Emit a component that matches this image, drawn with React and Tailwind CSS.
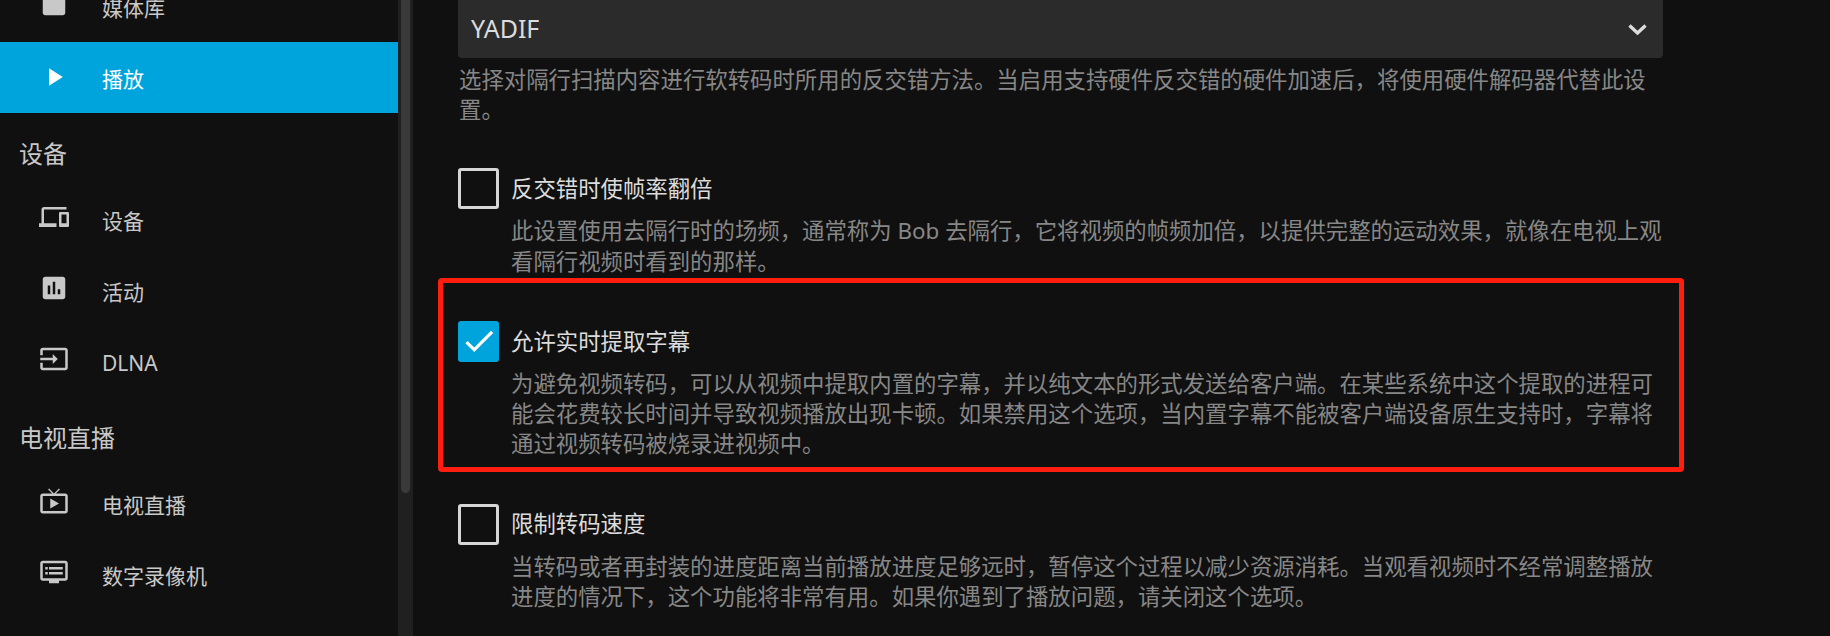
import React from 'react';

const FONT = 'font-["Noto_Sans","Noto_Sans_CJK_SC",sans-serif]';

const ICONS = {
  library: 'M19 3H5c-1.1 0-2 .9-2 2v14c0 1.1.9 2 2 2h14c1.1 0 2-.9 2-2V5c0-1.1-.9-2-2-2z',
  play: 'M8 5v14l11-7z',
  devices: 'M4 6h18V4H4c-1.1 0-2 .9-2 2v11H0v3h14v-3H4V6zm19 2h-6c-.55 0-1 .45-1 1v10c0 .55.45 1 1 1h6c.55 0 1-.45 1-1V9c0-.55-.45-1-1-1zm-1 9h-4v-7h4v7z',
  activity: 'M19 3H5c-1.1 0-2 .9-2 2v14c0 1.1.9 2 2 2h14c1.1 0 2-.9 2-2V5c0-1.1-.9-2-2-2zM9 17H7v-7h2v7zm4 0h-2V7h2v10zm4 0h-2v-4h2v4z',
  input: 'M21 3.01H3c-1.1 0-2 .9-2 2V9h2V4.99h18v14.03H3V15H1v4.01c0 1.1.9 1.98 2 1.98h18c1.1 0 2-.88 2-1.98v-14c0-1.11-.9-2-2-2zM11 16l4-4-4-4v3H1v2h10v3z',
  liveTv: 'M21 6h-7.59l3.29-3.29L16 2l-4 4-4-4-.71.71L10.59 6H3c-1.1 0-2 .89-2 2v12c0 1.1.9 2 2 2h18c1.1 0 2-.9 2-2V8c0-1.11-.9-2-2-2zm0 14H3V8h18v12zM9 10v8l7-4z',
  dvr: 'M21 3H3c-1.1 0-2 .9-2 2v12c0 1.1.9 2 2 2h5v2h8v-2h5c1.1 0 1.99-.9 1.99-2L23 5c0-1.1-.9-2-2-2zm0 14H3V5h18v12zm-2-9H8v2h11V8zm0 4H8v2h11v-2zM7 8H5v2h2V8zm0 4H5v2h2v-2z',
};

function NavItem({ icon, label, active }) {
  return (
    <div className={`flex items-center h-[71px] pl-[39px] text-[21px] ${active ? 'bg-[#00a4dc] text-white' : 'text-[#c8c8c8]'}`}>
      <svg viewBox="0 0 24 24" className={`w-[30px] h-[30px] shrink-0 fill-current ${active ? '-mt-[2px]' : '-mt-[6px]'}`}>
        <path d={ICONS[icon]} />
      </svg>
      <span className="ml-[33px] mt-[4px]">{label}</span>
    </div>
  );
}

function SectionTitle({ children }) {
  return (
    <div className="h-[71px] pt-[23px] pl-[19px] text-[24px] leading-[36px] text-[#c8c8c8]">{children}</div>
  );
}

function CheckItem({ label, checked, children }) {
  return (
    <div className="mb-[44px]">
      <div className="flex items-center h-[41px] gap-[12px]">
        {checked ? (
          <div className="w-[41px] h-[41px] rounded-[3px] bg-[#00a4dc] flex items-center justify-center">
            <svg viewBox="0 0 24 24" className="w-[38px] h-[38px] fill-white">
              <path d="M9 16.17L4.83 12l-1.42 1.41L9 19 21 7l-1.41-1.41z" />
            </svg>
          </div>
        ) : (
          <div className="w-[41px] h-[41px] rounded-[3px] border-[3px] border-[#d6d6d6]" />
        )}
        <span className="text-[22.4px] text-[#dcdcdc]">{label}</span>
      </div>
      <p className="ml-[53px] mt-[7px] text-[22.4px] leading-[30.24px] text-[#878787] [text-spacing-trim:space-all]">{children}</p>
    </div>
  );
}

export default function App() {
  return (
    <div className={`relative flex h-[636px] w-[1830px] overflow-hidden bg-[#101010] ${FONT}`}>
      <aside className="w-[398px] shrink-0 -mt-[29px]">
        <NavItem icon="library" label="媒体库" />
        <NavItem icon="play" label="播放" active />
        <SectionTitle>设备</SectionTitle>
        <NavItem icon="devices" label="设备" />
        <NavItem icon="activity" label="活动" />
        <NavItem icon="input" label="DLNA" />
        <SectionTitle>电视直播</SectionTitle>
        <NavItem icon="liveTv" label="电视直播" />
        <NavItem icon="dvr" label="数字录像机" />
      </aside>

      {/* scrollbar */}
      <div className="w-[15px] shrink-0 bg-[#202020] pl-[3px]">
        <div className="w-[9px] h-[493px] rounded-b-[5px] bg-[#3a3a3a]" />
      </div>

      <main className="w-[1205px] ml-[45px] shrink-0 -mt-[10px]">
        <div className="flex items-center justify-between h-[68px] pt-[10px] pl-[13px] pr-[16px] rounded-[4px] bg-[#2b2b2b] text-[25px] text-[#dcdcdc]">
          <span>YADIF</span>
          <svg viewBox="0 0 19 11" className="w-[19px] h-[11px] fill-none stroke-[#dcdcdc] stroke-[3.4px] mt-[1px]">
            <path d="M1.5 1.5L9.5 9L17.5 1.5" />
          </svg>
        </div>
        <p className="mt-[7px] mb-[43px] pl-[1px] text-[22.4px] leading-[30.24px] text-[#878787] [text-spacing-trim:space-all]">
          选择对隔行扫描内容进行软转码时所用的反交错方法。当启用支持硬件反交错的硬件加速后，将使用硬件解码器代替此设置。
        </p>
        <CheckItem label="反交错时使帧率翻倍">
          此设置使用去隔行时的场频，通常称为 Bob 去隔行，它将视频的帧频加倍，以提供完整的运动效果，就像在电视上观看隔行视频时看到的那样。
        </CheckItem>
        <CheckItem label="允许实时提取字幕" checked>
          为避免视频转码，可以从视频中提取内置的字幕，并以纯文本的形式发送给客户端。在某些系统中这个提取的进程可能会花费较长时间并导致视频播放出现卡顿。如果禁用这个选项，当内置字幕不能被客户端设备原生支持时，字幕将通过视频转码被烧录进视频中。
        </CheckItem>
        <CheckItem label="限制转码速度">
          当转码或者再封装的进度距离当前播放进度足够远时，暂停这个过程以减少资源消耗。当观看视频时不经常调整播放进度的情况下，这个功能将非常有用。如果你遇到了播放问题，请关闭这个选项。
        </CheckItem>
      </main>

      {/* annotation drawn over the page */}
      <div className="absolute left-[438px] top-[278px] w-[1246px] h-[194px] rounded-[4px] border-[5px] border-[#ff1e10]" />
    </div>
  );
}
